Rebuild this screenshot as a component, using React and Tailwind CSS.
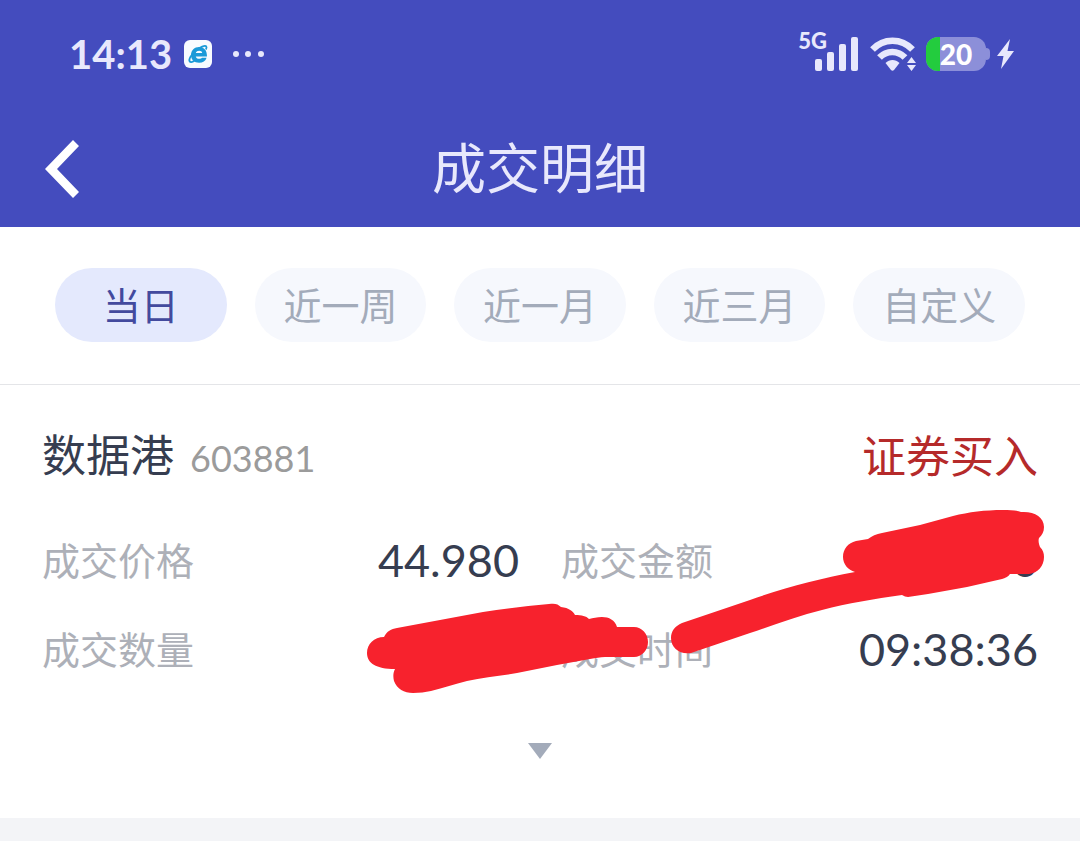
import { clsx } from "clsx"

const ranges = ["当日", "近一周", "近一月", "近三月", "自定义"]

const fields = [
    { label: "成交价格", value: "44.980" },
    { label: "成交金额", value: "0" },
    { label: "成交数量", value: "" },
    { label: "成交时间", value: "09:38:36" },
]

function BrowserBadge() {
    return (
        <svg className="w-7 h-7" viewBox="0 0 28 28" aria-hidden="true">
            <rect width="28" height="28" rx="6" fill="#f8fbff" />
            <path
                d="M23 16.500H11.800c.3 1.500 1.500 2.300 3.400 2.300 1.300 0 2.200-.4 2.800-1.100h4.600c-1 3.200-3.800 5-7.500 5-4.900 0-8.100-3.100-8.100-7.700 0-4.800 3.400-8.100 8.200-8.100 5 0 7.900 3.400 7.800 9.600zM18.200 12.900c-.2-1.300-1.300-2.100-3.100-2.100-1.700 0-2.900.8-3.300 2.100z"
                fill="#1b9ad8"
            />
            <path
                d="M10.500 20.800c-2.500 1.600-4.300 1.500-4.900.5-1.100-1.700 1.300-6.500 6-10.400s9.400-6 10.600-4.500c.6.800.3 2-.3 3.100"
                fill="none"
                stroke="#1b9ad8"
                strokeWidth="1.800"
            />
        </svg>
    )
}

function Signal() {
    return (
        <svg className="w-[43px] h-[34px]" viewBox="0 0 43 34" fill="#e8e8fc" aria-hidden="true">
            <rect x="0" y="22" width="7" height="12" rx="2" />
            <rect x="12" y="15" width="7" height="19" rx="2" />
            <rect x="24" y="7" width="7" height="27" rx="2" />
            <rect x="36" y="0" width="7" height="34" rx="2" />
        </svg>
    )
}

function Wifi() {
    return (
        <svg className="w-[46px] h-[34px]" viewBox="0 0 46 34" aria-hidden="true">
            <g fill="none" stroke="#e8e8fc" strokeWidth="6.500">
                <path d="M2.500 12.500C13.500.8 31.500.8 42.500 12.500" />
                <path d="M9.500 20.500c7-7.500 18.500-7.500 25.500 0" />
            </g>
            <path d="M15.500 26c4-4 10-4 14 0l-5.500 7c-1 1-2 1-3 0z" fill="#e8e8fc" />
            <path d="M41.500 20l4.500 6h-9zM41.500 34l4.500-6h-9z" fill="#e8e8fc" />
        </svg>
    )
}

function Battery() {
    return (
        <div className="flex items-center">
            <div className="relative flex w-[60px] h-[34px] rounded-[12px] overflow-hidden bg-[#8c8fd9]">
                <div className="w-[14px] bg-[#23cc3e]"></div>
                <span className="absolute inset-0 text-center text-[28px] leading-[34px] font-black text-white">20</span>
            </div>
            <div className="w-1 h-3 rounded-r-full bg-[#8c8fd9]"></div>
        </div>
    )
}

function StatusBar() {
    return (
        <div className="flex items-center justify-between h-[68px] pl-[69px] pr-[66px] text-[#e8e8fc]">
            <div className="flex items-center">
                <span className="text-[40px] leading-[68px] font-bold">14:13</span>
                <div className="ml-3">
                    <BrowserBadge />
                </div>
                <svg className="w-8 h-2 ml-5" viewBox="0 0 32 8" fill="#e8e8fc" aria-hidden="true">
                    <circle cx="4" cy="4" r="3" />
                    <circle cx="16" cy="4" r="3" />
                    <circle cx="29" cy="4" r="3" />
                </svg>
            </div>
            <div className="flex items-center">
                <span className="self-start -mt-2 -mr-3 text-[22px] leading-6 font-black">5G</span>
                <Signal />
                <div className="ml-3">
                    <Wifi />
                </div>
                <div className="ml-[10px]">
                    <Battery />
                </div>
                <svg className="w-[17px] h-[30px] ml-[7px]" viewBox="0 0 17 30" fill="#e8e8fc" aria-hidden="true">
                    <path d="M13 0L0 17h6.500L4 30l13-18h-6.500z" />
                </svg>
            </div>
        </div>
    )
}

// red marker strokes hiding the private figures
function MarkerStrokes() {
    return (
        <svg
            className="absolute inset-0 w-full h-full pointer-events-none"
            viewBox="0 385 1080 433"
            fill="#f7222d"
            aria-hidden="true"
        >
            <path d="M384 637C374 637 367 644 367 653C367 663 376 669 395 669C393 673 393 677 394 681C397 689 404 693 413 693C420 693 425 692 431 691C444 688 454 684 467 681C483 677 500 676 517 673L557 665L590 659C596 658 600 657 605 657H634C642 657 648 650 648 642C648 634 642 627 634 627H617C615 620 609 617 602 617C597 617 593 618 589 619C586 616 582 615 575 615C573 611 569 608 561 607C558 604 555 603 549 604C526 606 504 609 483 612L397 628C391 629 387 631 384 637Z" />
            <path d="M855 572C848 570 843 564 843 557C843 549 848 543 856 541L868 539C872 536 876 534 882 533L920 525L953 516C969 512 985 510 1003 510C1010 510 1016 510 1021 512C1034 511 1044 517 1044 527C1044 532 1042 535 1039 538C1038 541 1039 544 1040 547C1043 550 1044 553 1044 557C1044 566 1038 573 1029 574H1010C1008 577 1005 578 1002 579L967 587L928 594L908 597C906 597 904 596 902 595C874 599 848 603 822 610C798 616 774 625 750 633L691 653C680 655 671 648 671 638C671 631 675 626 682 623L750 600C786 587 819 579 855 572Z" />
        </svg>
    )
}

export default function App() {
    return (
        <div className="min-h-screen bg-[#f3f4f7] font-[Lato,'Noto_Sans_CJK_SC',sans-serif]">
            <header className="pt-5 bg-[#444cbe]">
                <StatusBar />
                <div className="mt-[23px] h-[116px] px-[45px] grid grid-cols-[1fr_auto_1fr] items-center">
                    <button type="button" aria-label="返回" className="justify-self-start">
                        <svg className="w-[34px] h-[58px]" viewBox="0 0 34 58" fill="#fff">
                            <path d="M28 0L34 6L12 29L34 52L28 58L0 29Z" />
                        </svg>
                    </button>
                    <h1 className="text-[54px] leading-[72px] text-[#e8e8fc]">成交明细</h1>
                </div>
            </header>

            <nav className="grid grid-cols-5 gap-7 px-[55px] pt-[41px] pb-[42px] bg-white border-b border-[#e4e5e8]">
                {ranges.map((range, index) => (
                    <button
                        key={range}
                        type="button"
                        className={clsx(
                            "h-[74px] rounded-full text-[38px] leading-[74px] whitespace-nowrap",
                            index === 0 ? "bg-[#e4e9fd] text-[#434a9e]" : "bg-[#f6f8fd] text-[#a3abba]"
                        )}
                    >
                        {range}
                    </button>
                ))}
            </nav>

            <main className="relative px-[42px] pt-10 pb-[11px] bg-white">
                <div className="flex items-center justify-between h-[62px]">
                    <div className="flex items-baseline">
                        <h2 className="text-[44px] leading-[62px] text-[#363d50]">数据港</h2>
                        <span className="ml-4 text-[36px] leading-[62px] text-[#9b9b9b]">603881</span>
                    </div>
                    <span className="text-[44px] leading-[62px] text-[#b52a2a]">证券买入</span>
                </div>

                <dl className="mt-[30px] grid grid-cols-2 gap-x-[42px]">
                    {fields.map((field) => (
                        <div key={field.label} className="flex items-center justify-between h-[89px] pb-1">
                            <dt className="text-[38px] leading-[60px] text-[#adb0b8]">{field.label}</dt>
                            <dd className="text-[45px] leading-[60px] text-[#363d50]">{field.value}</dd>
                        </div>
                    ))}
                </dl>

                <button type="button" aria-label="展开" className="flex items-center justify-center w-full h-28">
                    <svg className="w-6 h-4" viewBox="0 0 24 16" fill="#a3abba">
                        <path d="M0 0H24L12 16Z" />
                    </svg>
                </button>

                <MarkerStrokes />
            </main>
        </div>
    )
}
